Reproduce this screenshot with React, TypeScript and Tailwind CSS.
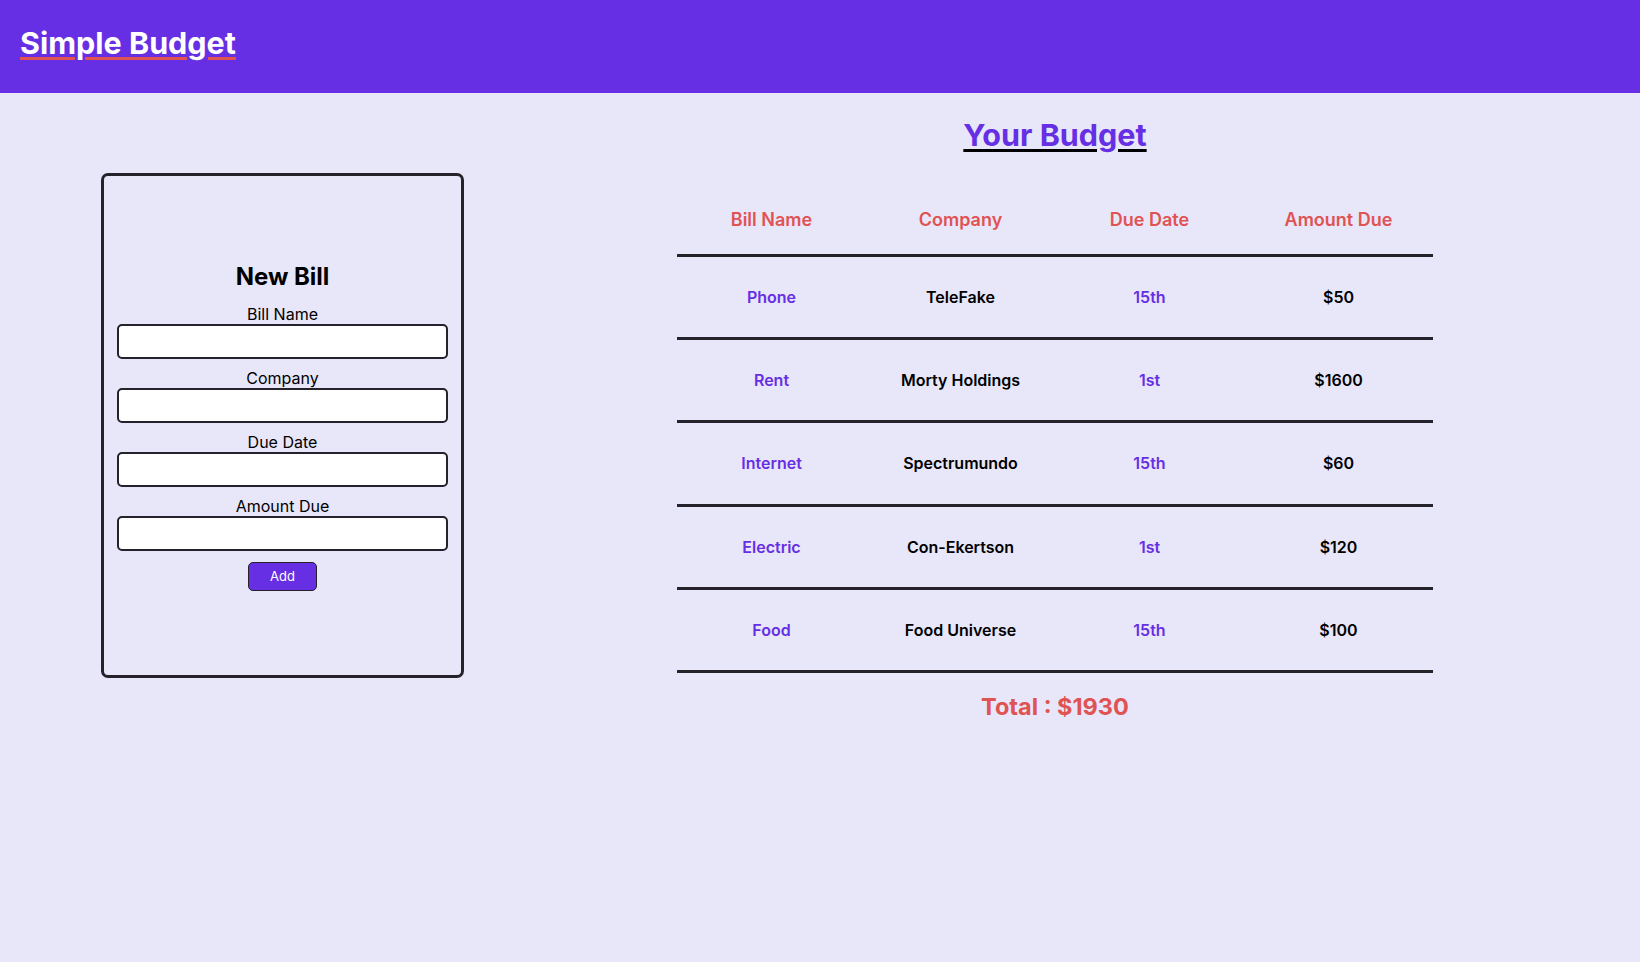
const bills = [
  { name: 'Phone', company: 'TeleFake', due: '15th', amount: 50 },
  { name: 'Rent', company: 'Morty Holdings', due: '1st', amount: 1600 },
  { name: 'Internet', company: 'Spectrumundo', due: '15th', amount: 60 },
  { name: 'Electric', company: 'Con-Ekertson', due: '1st', amount: 120 },
  { name: 'Food', company: 'Food Universe', due: '15th', amount: 100 },
];

const fields = ['Bill Name', 'Company', 'Due Date', 'Amount Due'];

function NewBillForm() {
  return (
    <form className="mt-[80px] ml-[101px] flex h-[505px] w-[363px] shrink-0 flex-col items-center justify-center rounded-[7px] border-[3px] border-[#25222b] px-[13px] pt-[2px]">
      <h2 className="mb-[14px] text-[24px] font-bold leading-[29px] text-black">New Bill</h2>
      {fields.map((f) => (
        <div key={f} className="mb-[10px] flex w-full flex-col items-center">
          <label className="text-[16px] leading-[19px] text-black">{f}</label>
          <input
            type="text"
            className="h-[35px] w-full rounded-[5px] border-2 border-[#25222b] bg-white px-2"
          />
        </div>
      ))}
      <button
        type="submit"
        className="mt-[1px] h-[29px] w-[69px] rounded-[5px] border border-[#25222b] bg-[#662fe4] text-[13px] text-white"
      >
        Add
      </button>
    </form>
  );
}

function BudgetTable() {
  const total = bills.reduce((s, b) => s + b.amount, 0);
  return (
    <section className="flex flex-1 flex-col items-center pt-[24px] pl-[6px]">
      <h1 className="text-[30.5px] font-bold leading-[36px] text-[#662fe4] underline decoration-black decoration-[3px] underline-offset-[3px]">
        Your Budget
      </h1>
      <div className="w-[756px]">
        <div className="grid grid-cols-4 border-b-[3px] border-[#25222b] pt-[56px] pb-[23px] text-center text-[18px] font-semibold leading-[22px] text-[#e05353]">
          <div>Bill Name</div>
          <div>Company</div>
          <div>Due Date</div>
          <div>Amount Due</div>
        </div>
        {bills.map((b) => (
          <div
            key={b.name}
            className="grid grid-cols-4 border-b-[3px] border-[#25222b] py-[30px] text-center text-[16px] font-semibold leading-[20.2px]"
          >
            <div className="text-[#662fe4]">{b.name}</div>
            <div className="text-black">{b.company}</div>
            <div className="text-[#662fe4]">{b.due}</div>
            <div className="text-black">${b.amount}</div>
          </div>
        ))}
      </div>
      <p className="mt-[20px] text-[23.5px] font-bold leading-[27px] text-[#e05353]">Total : ${total}</p>
    </section>
  );
}

export default function App() {
  return (
    <div className="min-h-screen bg-[#e8e6f9] font-['Inter',sans-serif]">
      <header className="h-[93px] bg-[#662fe4] pt-[25px] pl-[20px]">
        <h1 className="text-[30.5px] font-bold leading-[36px] text-white underline decoration-[#e05353] decoration-[3px] underline-offset-[3px]">
          Simple Budget
        </h1>
      </header>
      <main className="flex items-start">
        <NewBillForm />
        <BudgetTable />
      </main>
    </div>
  );
}
